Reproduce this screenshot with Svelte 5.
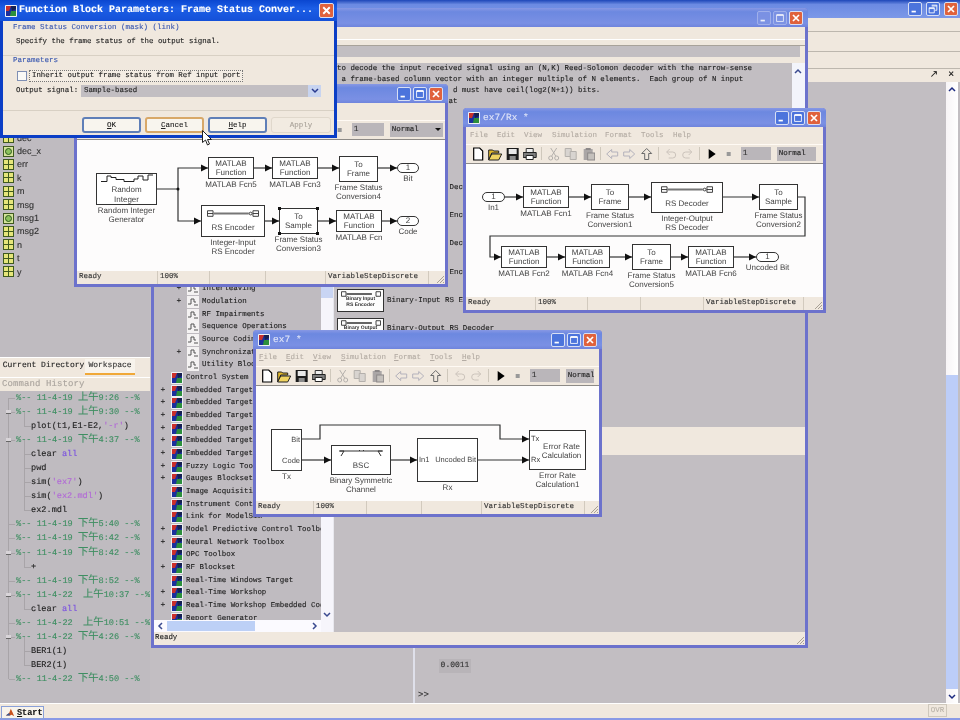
<script>
  const wsRows = [
    ['dec', 'grid'], ['dec_x', 'obj'], ['err', 'grid'], ['k', 'grid'], ['m', 'grid'], ['msg', 'grid'],
    ['msg1', 'obj'], ['msg2', 'grid'], ['n', 'grid'], ['t', 'grid'], ['y', 'grid']
  ];

  const d = (text, ampm, time, open = false, wide = false) => ({ kind: 'date', text, ampm, time, open, wide });
  const c = (parts) => ({ kind: 'cmd', parts });
  const history = [
    d('11-4-19', '上午', '9:26'),
    d('11-4-19', '上午', '9:30', true),
    c([['plot(t1,E1-E2,', ''], ["'-r'", 's'], [')', '']]),
    d('11-4-19', '下午', '4:37', true),
    c([['clear ', ''], ['all', 'k']]),
    c([['pwd', '']]),
    c([['sim(', ''], ["'ex7'", 's'], [')', '']]),
    c([['sim(', ''], ["'ex2.mdl'", 's'], [')', '']]),
    c([['ex2.mdl', '']]),
    d('11-4-19', '下午', '5:40'),
    d('11-4-19', '下午', '6:42'),
    d('11-4-19', '下午', '8:42', true),
    c([['+', '']]),
    d('11-4-19', '下午', '8:52'),
    d('11-4-22', '上午', '10:37', true, true),
    c([['clear ', ''], ['all', 'k']]),
    d('11-4-22', '上午', '10:51', false, true),
    d('11-4-22', '下午', '4:26', true),
    c([['BER1(1)', '']]),
    c([['BER2(1)', '']]),
    d('11-4-22', '下午', '4:50')
  ];

  const tree = [
    ['Interleaving', 1, 1], ['Modulation', 1, 1], ['RF Impairments', 1, 0], ['Sequence Operations', 1, 0],
    ['Source Coding', 1, 0], ['Synchronization', 1, 1], ['Utility Blocks', 1, 0],
    ['Control System Toolbox', 0, 0], ['Embedded Target for C2000', 0, 1], ['Embedded Target for C6000', 0, 1],
    ['Embedded Target for HC12', 0, 1], ['Embedded Target for MPC', 0, 1], ['Embedded Target for OSEK', 0, 1],
    ['Embedded Target for TI', 0, 1], ['Fuzzy Logic Toolbox', 0, 1], ['Gauges Blockset', 0, 1],
    ['Image Acquisition', 0, 0], ['Instrument Control', 0, 0], ['Link for ModelSim', 0, 0],
    ['Model Predictive Control Toolbox', 0, 1], ['Neural Network Toolbox', 0, 1], ['OPC Toolbox', 0, 0],
    ['RF Blockset', 0, 1], ['Real-Time Windows Target', 0, 0], ['Real-Time Workshop', 0, 1],
    ['Real-Time Workshop Embedded Coder', 0, 1], ['Report Generator', 0, 0]
  ];

  const libRows = [
    ['Binary Cyclic Decoder', ''], ['Binary Cyclic Encoder', ''], ['Binary Linear Decoder', ''],
    ['Binary Linear Encoder', ''], ['Binary-Input RS Encoder', 'Binary Input|RS Encoder'],
    ['Binary-Output RS Decoder', 'Binary Output|RS Decoder']
  ];

  const mf = ['MATLAB', 'Function'];
  const fsc = (n) => ['Frame Status', 'Conversion' + n];

  const windows = [
    {
      id: 'tx', x: 74, y: 84, w: 374, h: 203, title: 'ex7/Tx *', titleGap: 24,
      status: [81, 52, 56, 60, 103],
      comboW: 53, box: 32, menuLeft: 6, tbPad: 3,
      blocks: [
        { x: 96, y: 173, w: 61, h: 32, text: ['Random', 'Integer'], label: ['Random Integer', 'Generator'], icon: 'rand' },
        { x: 208, y: 157, w: 46, h: 22, text: mf, label: ['MATLAB Fcn5'] },
        { x: 272, y: 157, w: 46, h: 22, text: mf, label: ['MATLAB Fcn3'] },
        { x: 339, y: 156, w: 39, h: 26, text: ['To', 'Frame'], label: fsc(4) },
        { x: 397, y: 163, w: 22, h: 10, text: ['1'], label: ['Bit'], pill: true },
        { x: 201, y: 205, w: 64, h: 32, text: ['RS Encoder'], label: ['Integer-Input', 'RS Encoder'], icon: 'rs' },
        { x: 279, y: 208, w: 39, h: 26, text: ['To', 'Sample'], label: fsc(3), selected: true },
        { x: 336, y: 210, w: 46, h: 22, text: mf, label: ['MATLAB Fcn'] },
        { x: 397, y: 216, w: 22, h: 10, text: ['2'], label: ['Code'], pill: true }
      ],
      wires: [
        [[157, 189], [178, 189], [178, 168], [208, 168]],
        [[178, 189], [178, 221], [201, 221]],
        [[254, 168], [272, 168]], [[318, 168], [339, 168]], [[378, 168], [397, 168]],
        [[265, 221], [279, 221]], [[318, 221], [336, 221]], [[382, 221], [397, 221]]
      ]
    },
    {
      id: 'rx', x: 463, y: 108, w: 363, h: 205, title: 'ex7/Rx *', titleGap: 0,
      status: [70, 52, 53, 63, 100],
      comboW: 39, box: 30, menuLeft: 4, tbPad: 3,
      blocks: [
        { x: 482, y: 192, w: 23, h: 10, text: ['1'], label: ['In1'], pill: true },
        { x: 523, y: 186, w: 46, h: 22, text: mf, label: ['MATLAB Fcn1'] },
        { x: 591, y: 184, w: 38, h: 26, text: ['To', 'Frame'], label: fsc(1) },
        { x: 651, y: 182, w: 72, h: 31, text: ['RS Decoder'], label: ['Integer-Output', 'RS Decoder'], icon: 'rs' },
        { x: 759, y: 184, w: 39, h: 26, text: ['To', 'Sample'], label: fsc(2) },
        { x: 501, y: 246, w: 46, h: 22, text: mf, label: ['MATLAB Fcn2'] },
        { x: 565, y: 246, w: 45, h: 22, text: mf, label: ['MATLAB Fcn4'] },
        { x: 632, y: 244, w: 39, h: 26, text: ['To', 'Frame'], label: fsc(5) },
        { x: 688, y: 246, w: 46, h: 22, text: mf, label: ['MATLAB Fcn6'] },
        { x: 756, y: 252, w: 23, h: 10, text: ['1'], label: ['Uncoded Bit'], pill: true }
      ],
      wires: [
        [[505, 197], [523, 197]], [[569, 197], [591, 197]], [[629, 197], [651, 197]], [[723, 197], [759, 197]],
        [[798, 197], [805, 197], [805, 236], [490, 236], [490, 257], [501, 257]],
        [[547, 257], [565, 257]], [[610, 257], [632, 257]], [[671, 257], [688, 257]], [[734, 257], [756, 257]]
      ]
    },
    {
      id: 'top', x: 253, y: 330, w: 349, h: 187, title: 'ex7 *', titleGap: 0,
      status: [58, 53, 55, 60, 103],
      comboW: 28, box: 30, menuLeft: 3, tbPad: 2, underline: true,
      blocks: [
        { x: 271, y: 429, w: 31, h: 42, text: [], label: ['Tx'], ports: [['Bit', 'r', 10], ['Code', 'r', 31]] },
        { x: 331, y: 445, w: 60, h: 30, text: ['BSC'], label: ['Binary Symmetric', 'Channel'], icon: 'bsc' },
        { x: 417, y: 438, w: 61, h: 44, text: [], label: ['Rx'], ports: [['In1', 'l', 21], ['Uncoded Bit', 'r', 21]] },
        { x: 529, y: 430, w: 57, h: 40, text: ['Error Rate', 'Calculation'], label: ['Error Rate', 'Calculation1'], ports: [['Tx', 'l', 8], ['Rx', 'l', 29]], nudge: true }
      ],
      wires: [
        [[302, 439], [320, 439], [320, 425], [500, 425], [500, 439], [529, 439]],
        [[302, 460], [331, 460]], [[391, 460], [417, 460]], [[478, 460], [529, 460]]
      ]
    }
  ];

  const menuItems = [
    ['File', 27], ['Edit', 27], ['View', 28], ['Simulation', 53], ['Format', 36], ['Tools', 32], ['Help', 30]
  ];
  const tools = ['new', 'open', 'save', 'print', '|', 'cut', 'copy', 'paste', '|', 'back', 'fwd', 'up', '|', 'undo', 'redo', '|', 'play', 'stop'];
  const TITLE = 19, MENU = 17, BAR = 20, EDGE = 3;
  const originX = (w) => w.x + EDGE;
  const originY = (w) => w.y + TITLE + MENU + BAR;
  const pts = (wire) => wire.map((p) => p.join(',')).join(' ');
  const head = (wire) => {
    const [x, y] = wire[wire.length - 1];
    return `${x - 7},${y - 3.5} ${x},${y} ${x - 7},${y + 3.5}`;
  };
</script>

{#snippet simIcon()}
  <svg class="simicon" viewBox="0 0 12 12" aria-hidden="true">
    <rect width="12" height="12" rx="1" fill="#eef0f4" />
    <rect x="1" y="1" width="10" height="10" fill="#1b2f9c" />
    <path d="M1 1h5l-2 5H1z" fill="#c9302c" />
    <path d="M6 6h5v5H5z" fill="#2c8f3c" />
    <path d="M6 1h5v3L7 6z" fill="#16204f" />
  </svg>
{/snippet}

{#snippet winButtons(active, restore = false)}
  <div class="wbs" class:wide={restore}>
    <span class="wb" class:dim={!active}><svg viewBox="0 0 14 14" aria-hidden="true"><rect x="3" y="9" width="5" height="2" fill="#fff" /></svg></span>
    <span class="wb" class:dim={!active}>
      <svg viewBox="0 0 14 14" aria-hidden="true">
        {#if restore}
          <path d="M5.500 2.500h6v6h-2M2.500 5.500h6v6h-6zM2.500 6.500h6M5.500 3.500h6" fill="none" stroke="#fff" />
        {:else}
          <path d="M3 3.500h8v7.500H3z" fill="none" stroke="#fff" /><path d="M3 3.500h8" stroke="#fff" stroke-width="2" />
        {/if}
      </svg>
    </span>
    <span class="wb close"><svg viewBox="0 0 14 14" aria-hidden="true"><path d="M3.500 3.500l7 7M10.500 3.500l-7 7" stroke="#fff" stroke-width="2" /></svg></span>
  </div>
{/snippet}

{#snippet tool(name)}
  <svg class="tool" viewBox="0 0 14 14" aria-hidden="true">
    {#if name === 'new'}
      <path d="M3 1h6l3 3v9H3z" fill="#fff" stroke="#000" stroke-width="1.200" />
    {:else if name === 'open'}
      <path d="M1 3h4l1 1h5v2H4l-3 7z" fill="#e2b92e" stroke="#222" /><path d="M1 13l3-6h10l-3 6z" fill="#f0d462" stroke="#222" />
    {:else if name === 'save'}
      <path d="M1 1h12v12H1z" fill="#1c1c1c" /><rect x="3" y="2" width="8" height="5" fill="#e8e8e8" /><rect x="4" y="9" width="6" height="4" fill="#8c8c8c" />
    {:else if name === 'print'}
      <path d="M3.500 1.500h7v4h-7z" fill="#eee" stroke="#333" /><path d="M.500 5.500h13v5H.500z" fill="#7d7d7d" stroke="#222" /><path d="M3.500 8.500h7v4h-7z" fill="#fff" stroke="#222" />
    {:else if name === 'cut'}
      <path d="M4 1l5 8M10 1L5 9" stroke="#b4b0ac" fill="none" /><circle cx="4" cy="11" r="2" fill="none" stroke="#b4b0ac" /><circle cx="10" cy="11" r="2" fill="none" stroke="#b4b0ac" />
    {:else if name === 'copy'}
      <path d="M1.500 1.500h6v8h-6z" fill="#d8d4d0" stroke="#b4b0ac" /><path d="M6.500 4.500h6v8h-6z" fill="#d8d4d0" stroke="#b4b0ac" />
    {:else if name === 'paste'}
      <path d="M2 2h9v11H2z" fill="#aaa6a6" /><rect x="4" y="1" width="5" height="2" fill="#8c8888" /><rect x="6" y="6" width="7" height="7" fill="#c4c0bc" stroke="#8c8888" />
    {:else if name === 'back'}
      <path d="M7 2.500L2 7l5 4.500V9h6V5H7z" fill="none" stroke="#b4b2bc" />
    {:else if name === 'fwd'}
      <path d="M7 2.500L12 7l-5 4.500V9H1V5h6z" fill="none" stroke="#b4b2bc" />
    {:else if name === 'up'}
      <path d="M7 1.500L2 6.500h3v6h4v-6h3z" fill="none" stroke="#6a6a6a" />
    {:else if name === 'undo'}
      <path d="M3 5h6a3 3 0 0 1 0 6H5M3 5l3-3M3 5l3 3" fill="none" stroke="#ccc4bc" />
    {:else if name === 'redo'}
      <path d="M11 5H5a3 3 0 0 0 0 6h4M11 5L8 2M11 5L8 8" fill="none" stroke="#ccc4bc" />
    {:else if name === 'play'}
      <path d="M4 2l7 5-7 5z" fill="#000" />
    {:else}
      <rect x="5" y="5" width="4" height="4" fill="#999" />
    {/if}
  </svg>
{/snippet}

{#snippet blockIcon(kind)}
  {#if kind === 'rand'}
    <svg class="bi" viewBox="0 0 52 8" aria-hidden="true"><path d="M0 7.500h6V2h4v1.500h5v2h8v2h10V5h4V2h5v4h5V1h5" fill="none" stroke="#222" /></svg>
  {:else if kind === 'rs'}
    <svg class="bi rs" viewBox="0 0 56 8" aria-hidden="true"><path d="M.500.500h6v6h-6zM49.500.500h6v6h-6zM.500 3.500h6M49.500 3.500h6" fill="none" stroke="#333" /><path d="M7 3.500h38" stroke="#777" stroke-width="2" /><circle cx="47" cy="3.500" r="1.500" fill="#fff" stroke="#333" /></svg>
  {:else}
    <svg class="bi" viewBox="0 0 52 8" aria-hidden="true"><path d="M5 1h42M4 1h5L6 6M48 1h-5l3 5M24 .500h1M28 .500h1" fill="none" stroke="#333" /></svg>
  {/if}
{/snippet}

{#snippet simWindow(w)}
  <section class="win" style:left="{w.x}px" style:top="{w.y}px" style:width="{w.w}px" style:height="{w.h}px">
    <header class="title">
      {@render simIcon()}
      <span class="title-text" style:margin-left="{w.titleGap}px">{w.title}</span>
      {@render winButtons(true)}
    </header>
    <nav class="menu" style:padding-left="{w.menuLeft}px">
      {#each menuItems as [m, width]}
        <span style:width="{width}px" class:ul={w.underline}>{m}</span>
      {/each}
    </nav>
    <div class="bar" style:padding-left="{w.tbPad}px">
      {#each tools as t}
        {#if t === '|'}<i class="sep"></i>{:else}{@render tool(t)}{/if}
      {/each}
      <span class="box" style:width="{w.box}px">1</span>
      <span class="combo" style:width="{w.comboW}px">Normal{#if w.id === 'tx'}<b class="caret"></b>{/if}</span>
    </div>
    <div class="canvas">
      <svg class="wires" aria-hidden="true">
        <g transform="translate({-originX(w)} {-originY(w)})">
          {#each w.wires as wire}
            <polyline points={pts(wire)} />
            <polygon points={head(wire)} />
          {/each}
          {#if w.id === 'tx'}<circle cx="178" cy="189" r="1.500" />{/if}
        </g>
      </svg>
      {#each w.blocks as b}
        <div class="blk" class:pill={b.pill} class:nudge={b.nudge}
          style:left="{b.x - originX(w)}px" style:top="{b.y - originY(w)}px"
          style:width="{b.w}px" style:height="{b.h}px">
          {#if b.icon}{@render blockIcon(b.icon)}{/if}
          {#each b.text as line}<span>{line}</span>{/each}
          {#each b.ports ?? [] as [t, side, top]}
            <em class="port {side}" style:top="{top - 5}px">{t}</em>
          {/each}
          {#if b.selected}<u class="h tl"></u><u class="h tr"></u><u class="h bl"></u><u class="h br"></u>{/if}
          <div class="lab">{#each b.label as line}<span>{line}</span>{/each}</div>
        </div>
      {/each}
    </div>
    <footer class="status">
      <span style:width="{w.status[0]}px">Ready</span>
      <span style:width="{w.status[1]}px">100%</span>
      <span style:width="{w.status[2]}px"></span>
      <span style:width="{w.status[3]}px"></span>
      <span style:width="{w.status[4]}px">VariableStepDiscrete</span>
      <svg class="grip" viewBox="0 0 10 10" aria-hidden="true"><path d="M9 2L2 9M9 5L5 9M9 8L8 9" stroke="#a8a094" /></svg>
    </footer>
  </section>
{/snippet}

<div class="screen">
  <div class="desk">
    <header class="main-title">{@render winButtons(true, true)}</header>
    <div class="main-band h1"></div>
    <div class="main-band h2"></div>
    <div class="main-band h3"></div>
    <div class="dockhead"><span>↗</span><span>×</span></div>

    <div class="body">
      <aside class="left">
        <div class="ws">
          {#each wsRows as [name, kind]}
            <div class="ws-row">
              <svg class="wsicon" viewBox="0 0 11 11" aria-hidden="true">
                <rect x=".5" y=".5" width="10" height="10" fill={kind === 'obj' ? '#d4e49a' : '#e6e67a'} stroke="#3f5a1e" />
                {#if kind === 'obj'}
                  <circle cx="5.500" cy="5.500" r="3" fill="#8cc25c" stroke="#2f5a1e" />
                {:else}
                  <path d="M5.500 0v11M0 5.500h11" stroke="#3f5a1e" />
                {/if}
              </svg>
              {name}
            </div>
          {/each}
        </div>
        <div class="tabs">
          <span class="tab">Current Directory</span>
          <span class="tab on">Workspace</span>
        </div>
        <div class="hist-head">Command History</div>
        <div class="hist">
          {#each history as row}
            {#if row.kind === 'date'}
              <div class="hrow date" class:open={row.open}>%-- {row.text}{row.wide ? '  ' : ' '}<span class="cjk">{row.ampm}</span>{row.time} --%</div>
            {:else}
              <div class="hrow cmd">{#each row.parts as [t, k]}<span class={k}>{t}</span>{/each}</div>
            {/if}
          {/each}
        </div>
      </aside>

      <main class="right">
        <div class="cmdwin">
          <div class="cmd-scroll">
            <span class="ans">0.0011</span>
            <span class="prompt">&gt;&gt;</span>
          </div>
          <div class="vbar">
            <svg class="upb" viewBox="0 0 8 6" aria-hidden="true"><path d="M1 5l3-3 3 3" fill="none" stroke="#1c2a80" stroke-width="1.500" /></svg>
            <span class="thumb"></span>
            <svg class="dn" viewBox="0 0 8 6" aria-hidden="true"><path d="M1 1l3 3 3-3" fill="none" stroke="#1c2a80" stroke-width="1.500" /></svg>
          </div>
        </div>
      </main>
    </div>

    <footer class="main-status">
      <button class="start">
        <svg viewBox="0 0 12 12" aria-hidden="true"><path d="M1 9l4-3 2-5 2 4 2 5-3-2-2 1z" fill="#c8501c" /><path d="M1 9l4-3 1 3z" fill="#2c5aa0" /></svg>
        <span><u>S</u>tart</span>
      </button>
      <span class="ovr">OVR</span>
    </footer>
  </div>

  <section class="lib">
    <header class="title">
      {@render simIcon()}
      <span class="title-text">Simulink Library Browser</span>
      {@render winButtons(false)}
    </header>
    <div class="lib-menu"></div>
    <div class="lib-search"></div>
    <div class="lib-gap"></div>
    <div class="lib-body">
      <div class="tree">
        <div class="tree-scroll">
          {#each tree as [name, sub, plus]}
            <div class="tnode" class:sub={sub}>
              <span class="plus">{plus ? '+' : ''}</span>
              {#if sub}
                <svg class="subicon" viewBox="0 0 12 12" aria-hidden="true"><rect width="12" height="12" fill="#f4f2f2" /><path d="M1 8h3V3h3v3h2M7 9h4" fill="none" stroke="#555" /></svg>
              {:else}
                {@render simIcon()}
              {/if}
              <span class="tname">{name}</span>
            </div>
          {/each}
        </div>
        <div class="hbar">
          <svg viewBox="0 0 8 8" aria-hidden="true"><path d="M5 1L2 4l3 3" fill="none" stroke="#3a4a90" stroke-width="1.500" /></svg>
          <span class="hthumb"></span>
          <svg viewBox="0 0 8 8" aria-hidden="true"><path d="M3 1l3 3-3 3" fill="none" stroke="#3a4a90" stroke-width="1.500" /></svg>
        </div>
      </div>
      <div class="tvbar">
        <span class="tv-thumb"></span>
        <svg viewBox="0 0 8 6" aria-hidden="true"><path d="M1 1l3 3 3-3" fill="none" stroke="#3a4a90" stroke-width="1.500" /></svg>
      </div>
      <div class="pane">
        <div class="desc">
          <pre class="desc-text">to decode the input received signal using an (N,K) Reed-Solomon decoder with the narrow-sense
 a frame-based column vector with an integer multiple of N elements.  Each group of N input
                          d must have ceil(log2(N+1)) bits.
                         at</pre>
          <div class="desc-bar"><svg viewBox="0 0 8 6" aria-hidden="true"><path d="M1 5l3-3 3 3" fill="none" stroke="#3a4a90" stroke-width="1.500" /></svg></div>
        </div>
        <div class="lib-list">
          {#each libRows as [name, caption]}
            <div class="lrow">
              <div class="mini">
                <svg viewBox="0 0 44 6" aria-hidden="true"><path d="M.500.500h5v5h-5zM38.500.500h5v5h-5z" fill="none" stroke="#333" /><path d="M6 3h28" stroke="#555" stroke-width="2" /></svg>
                {#each caption.split('|') as cap}<span>{cap}</span>{/each}
              </div>
              <span class="lname">{name}</span>
            </div>
          {/each}
        </div>
        <div class="band"></div>
        <div class="pane-rest"></div>
      </div>
    </div>
    <footer class="lib-status">
      Ready
      <svg class="grip" viewBox="0 0 10 10" aria-hidden="true"><path d="M9 2L2 9M9 5L5 9M9 8L8 9" stroke="#a8a094" /></svg>
    </footer>
  </section>

  {#each windows as w}
    {@render simWindow(w)}
  {/each}

  <section class="dialog">
    <header class="dlg-title">
      {@render simIcon()}
      <span>Function Block Parameters: Frame Status Conver...</span>
      <span class="wb close"><svg viewBox="0 0 14 14" aria-hidden="true"><path d="M3.500 3.500l7 7M10.500 3.500l-7 7" stroke="#fff" stroke-width="2" /></svg></span>
    </header>
    <div class="dlg-body">
      <div class="grp">
        <div class="legend">Frame Status Conversion (mask) (link)</div>
        <div class="dlg-desc">Specify the frame status of the output signal.</div>
      </div>
      <div class="legend l2">Parameters</div>
      <div class="check-row">
        <i class="check"></i>
        <span class="focus">Inherit output frame status from Ref input port</span>
      </div>
      <div class="sel-row">
        <span class="sel-label">Output signal:</span>
        <span class="sel">Sample-based
          <b class="sel-btn"><svg viewBox="0 0 8 6" aria-hidden="true"><path d="M1 1l3 3 3-3" fill="none" stroke="#2a3a90" stroke-width="1.500" /></svg></b>
        </span>
      </div>
      <div class="dlg-btns">
        <button class="btn focus-btn"><u>O</u>K</button>
        <button class="btn hot"><u>C</u>ancel</button>
        <button class="btn focus-btn"><u>H</u>elp</button>
        <button class="btn off">Apply</button>
      </div>
    </div>
  </section>

  <svg class="cursor" viewBox="0 0 10 16" aria-hidden="true"><path d="M.5.500v12l3-2.500 2 5 2-1-2-4.500h4z" fill="#fff" stroke="#222" /></svg>
</div>

<style>
  :global(body) { margin: 0; background: #c2bec2; }
  .screen {
    position: relative; width: 960px; height: 720px; overflow: hidden; background: #c2bec2;
    font-family: "Liberation Mono", monospace; font-size: 7.5px; color: #222;
    text-rendering: geometricPrecision; filter: blur(.35px); -webkit-text-stroke: .12px currentColor;
  }
  svg { display: block; flex: none; }

  /* desktop */
  .desk { display: flex; flex-direction: column; height: 720px; }
  .main-title {
    height: 18px; flex: none; display: flex; justify-content: flex-end; align-items: center; padding-right: 2px;
    background: linear-gradient(#1d46b8, #6b8ae2 25%, #7c98e8);
  }
  .main-band { flex: none; background: #f0e8de; border-bottom: 1px solid #bdb7ae; box-sizing: content-box; }
  .h1 { height: 13px; } .h2 { height: 19px; } .h3 { height: 16px; }
  .dockhead {
    height: 13px; flex: none; background: #f0e8de; display: flex; justify-content: flex-end; gap: 10px;
    padding-right: 6px; font: 10px/12px "Liberation Sans", sans-serif; color: #111; border-bottom: 0;
  }
  .body { flex: 1; display: flex; min-height: 0; }
  .left { width: 150px; flex: none; display: flex; flex-direction: column; background: #bfbbc0; box-sizing: border-box; }
  .ws { height: 275px; flex: none; padding-top: 49px; box-sizing: border-box; }
  .ws-row { height: 13.4px; display: flex; align-items: center; gap: 3px; padding-left: 3px; font: 9px "Liberation Sans", sans-serif; color: #333; }
  .wsicon { width: 11px; height: 11px; }
  .tabs { height: 20px; flex: none; background: #f0e8de; border-top: 1px solid #fff; box-sizing: border-box; display: flex; padding: 1px 0 0 2px; }
  .tab { width: 83px; height: 14px; line-height: 14px; text-align: center; font-size: 8px; color: #222; }
  .tab.on { width: 50px; background: #f7f3ec; border-bottom: 2px solid #f0a838; color: #333; }
  .hist-head { height: 13px; flex: none; line-height: 13px; background: #efe7dc; border-top: 1px solid #fff; color: #aaa49e; font-size: 9px; padding-left: 2px; letter-spacing: .1px; }
  .hist { flex: 1; position: relative; padding-top: 0; font-size: 8.6px; line-height: 14px; overflow: hidden; }
  .hist::before { content: ""; position: absolute; left: 8px; top: 7px; height: 281px; border-left: 1px solid #a8a4a8; }
  .hrow { position: relative; height: 14.05px; white-space: pre; }
  .date { padding-left: 16px; color: #3f8f62; }
  .date::before { content: ""; position: absolute; left: 9px; top: 7px; width: 6px; border-top: 1px solid #a8a4a8; }
  .date.open::after {
    content: ""; position: absolute; left: 6px; top: 5px; width: 5px; height: 3px;
    background: #d8d4d8; border-bottom: 1px solid #666;
  }
  .cjk { font-family: "Noto Sans CJK SC", sans-serif; font-size: 10.3px; line-height: 10px; }
  .hrow.cmd { padding-left: 31px; color: #222; }
  .hrow.cmd::before { content: ""; position: absolute; left: 24px; top: -7px; height: 14px; width: 6px; border-left: 1px solid #a8a4a8; border-bottom: 1px solid #a8a4a8; }
  .s { color: #b26ad6; } .k { color: #7a50e0; }

  .right { flex: 1; min-width: 0; }
  .cmdwin { height: 100%; position: relative; }
  .cmd-scroll { position: absolute; left: 263px; bottom: 0; width: 530px; height: 55px; border-left: 2px solid #dfe0ea; }
  .ans { position: absolute; left: 24px; top: 11px; width: 32px; height: 14px; line-height: 14px; text-align: center; background: #b8b4b8; font-size: 8px; color: #333; }
  .prompt { position: absolute; left: 3px; top: 42px; font-size: 9px; color: #333; }
  .vbar { position: absolute; right: 2px; top: 0; bottom: 0; width: 12px; background: linear-gradient(90deg, #f7f4f6, #fff); }
  .upb { position: absolute; left: 2px; top: 4px; width: 8px; height: 6px; }
  .thumb { position: absolute; left: 0; right: 0; top: 293px; bottom: 14px; background: #bccdf8; }
  .dn { position: absolute; left: 2px; bottom: 3px; width: 8px; height: 6px; }
  .main-status { height: 14px; flex: none; background: #f0e8de; position: relative; border-bottom: 2px solid #8a9ae6; border-top: 1px solid #fff; }
  .start {
    position: absolute; left: 1px; top: 2px; width: 43px; height: 13px; padding: 0 0 0 3px; display: flex; align-items: center; gap: 2px;
    border: 1px solid #8aa0d8; background: #f8f4ec; font: bold 8.5px "Liberation Mono", monospace; color: #111; box-sizing: border-box;
  }
  .start svg { width: 10px; height: 10px; }
  .ovr { position: absolute; left: 928px; top: 0; width: 19px; height: 13px; line-height: 13px; text-align: center; border: 1px solid #cfc8bc; box-sizing: border-box; color: #bbb4aa; }

  /* title controls */
  .wbs { display: flex; gap: 2px; margin-left: auto; }
  .wbs.wide { gap: 4px; }
  .wb { width: 14px; height: 14px; border-radius: 2px; background: #4c74dc; border: 1px solid #d8dff4; box-sizing: border-box; display: block; flex: none; }
  .wb.dim { background: #7d93e4; border-color: #a8b6ec; opacity: .85; }
  .wb.close { background: #e0623c; }
  .wb svg { width: 12px; height: 12px; }
  .simicon { width: 12px; height: 12px; }

  /* windows */
  .win, .lib {
    position: absolute; display: flex; flex-direction: column; box-sizing: border-box; background: #f0e8de;
    border: 3px solid #6c72cc; border-top: 0; border-radius: 4px 4px 0 0;
  }
  .title {
    height: 19px; flex: none; margin: 0 -3px; padding: 0 5px; display: flex; align-items: center; gap: 3px; border-radius: 4px 4px 0 0;
    background: linear-gradient(#8898e4, #6c88e0 20%, #7a90e4 80%, #6f84dc);
  }
  .title-text { color: #dfe4f8; font-size: 9.400px; letter-spacing: .1px; }
  .menu { height: 17px; flex: none; display: flex; align-items: center; box-sizing: border-box; }
  .menu span { color: #b4aca4; font-size: 7.500px; flex: none; }
  .menu span.ul::first-letter { text-decoration: underline; }
  .bar { height: 20px; flex: none; display: flex; align-items: center; box-sizing: border-box; border-top: 1px solid #fffaf4; border-bottom: 1px solid #8d8a86; padding-bottom: 1px; }
  .tool { width: 14px; height: 14px; padding: 0 1.700px; }
  .sep { width: 1px; height: 13px; margin: 0 2.700px; background: #cfc8bc; flex: none; }
  .box { height: 13px; line-height: 13px; padding-left: 2px; margin-left: 3px; background: #bab6ba; color: #333; font-size: 8px; box-sizing: border-box; flex: none; }
  .combo { position: relative; height: 14px; line-height: 14px; padding-left: 2px; margin-left: 6px; background: #bab6ba; font-size: 7.500px; color: #222; box-sizing: border-box; flex: none; overflow: hidden; white-space: nowrap; }
  .caret { position: absolute; right: 2px; top: 5px; border: 3px solid transparent; border-top-color: #111; }
  .canvas { flex: 1; position: relative; background: #fdfcfc; min-height: 0; }
  .wires { position: absolute; inset: 0; width: 100%; height: 100%; }
  .wires polyline { fill: none; stroke: #333; stroke-width: 1.200; }
  .wires polygon, .wires circle { fill: #111; }
  .blk {
    position: absolute; box-sizing: border-box; border: 1.300px solid #333; background: #fff;
    display: flex; flex-direction: column; align-items: center; justify-content: center;
    font: 8px/9.500px "Liberation Sans", sans-serif; color: #444; -webkit-text-stroke: 0;
  }
  .blk.pill { border-radius: 5px; line-height: 8px; }
  .blk.nudge { padding-left: 8px; padding-top: 2px; }
  .bi { width: 52px; height: 8px; margin-bottom: 3px; max-width: 90%; }
  .bi.rs { margin-bottom: 5px; }
  .port { position: absolute; font-style: normal; font-size: 7.500px; line-height: 10px; }
  .port.r { right: 1px; } .port.l { left: 1px; }
  .h { position: absolute; width: 3px; height: 3px; background: #111; }
  .tl { left: -2px; top: -2px; } .tr { right: -2px; top: -2px; } .bl { left: -2px; bottom: -2px; } .br { right: -2px; bottom: -2px; }
  .lab { position: absolute; top: 100%; left: 50%; transform: translateX(-50%); width: max-content; padding-top: 1.500px; display: flex; flex-direction: column; align-items: center; line-height: 9.500px; }
  .status { height: 13px; flex: none; display: flex; align-items: stretch; background: #f0e8de; line-height: 13px; position: relative; }
  .status span { box-sizing: border-box; padding-left: 2px; border-right: 1px solid #d2cabe; color: #333; white-space: nowrap; flex: none; }
  .grip { position: absolute; right: 0; bottom: 0; width: 10px; height: 10px; }

  /* library */
  .lib { left: 151px; top: 8px; width: 657px; height: 640px; }
  .lib-menu { height: 19px; flex: none; box-sizing: border-box; border-bottom: 1px solid #a8a29a; box-shadow: inset 0 -5px 0 #f0e8de, inset 0 -6px 0 #fff; }
  .lib-search { height: 11px; flex: none; background: #c2bec2; margin-right: 5px; }
  .lib-gap { height: 6px; flex: none; }
  .lib-body { flex: 1; display: flex; min-height: 0; }
  .tree { width: 167px; flex: none; display: flex; flex-direction: column; background: #bfbbc0; }
  .tree-scroll { flex: 1; overflow: hidden; padding-top: 220px; min-height: 0; }
  .tnode { height: 12.680px; display: flex; align-items: center; white-space: nowrap; padding-left: 1px; font-size: 7.450px; color: #222; }
  .plus { width: 16px; flex: none; text-align: center; font-size: 8px; line-height: 8px; }
  .simicon + .tname { margin-left: 3px; }
  .tnode.sub { padding-left: 17px; }
  .subicon { width: 12px; height: 12px; margin-right: 3px; }
  .hbar { height: 12px; flex: none; background: #fbfaff; display: flex; align-items: center; padding: 0 3px; box-sizing: border-box; }
  .hbar svg { width: 8px; height: 8px; }
  .hthumb { width: 88px; height: 10px; margin: 0 2px; background: #bdd0f6; margin-right: auto; }
  .tvbar { width: 12px; flex: none; background: #f6f5fb; display: flex; flex-direction: column; justify-content: flex-end; position: relative; padding-bottom: 14px; box-sizing: border-box; }
  .tv-thumb { position: absolute; top: 0; left: 0; right: 0; height: 235px; background: #c9d5f4; }
  .tvbar svg { width: 8px; height: 6px; margin-left: 2px; }
  .pane { flex: 1; display: flex; flex-direction: column; min-width: 0; border-left: 1px solid #e8e8ee; background: #c2bec2; }
  .desc { height: 45px; flex: none; position: relative; overflow: hidden; }
  .desc-text { margin: 0; padding: 1px 0 0 3px; font: 7.450px/11px "Liberation Mono", monospace; color: #222; }
  .desc-bar { position: absolute; right: 0; top: 0; bottom: 0; width: 13px; background: #f3f4fb; }
  .desc-bar svg { width: 8px; height: 6px; margin: 5px 0 0 2px; }
  .lib-list { height: 319px; flex: none; padding-top: 66px; box-sizing: border-box; overflow: hidden; }
  .lrow { height: 28.200px; display: flex; align-items: center; padding-left: 3px; gap: 3px; }
  .mini { width: 47px; height: 23px; flex: none; box-sizing: border-box; border: 1px solid #333; background: #fdfdfd; display: flex; flex-direction: column; align-items: center; font: bold 5px/5.500px "Liberation Sans", sans-serif; color: #333; padding-top: 1px; -webkit-text-stroke: 0; }
  .mini svg { width: 40px; height: 6px; }
  .lname { font-size: 7.450px; color: #222; white-space: nowrap; }
  .band { height: 28px; flex: none; background: #f0e8de; }
  .pane-rest { flex: 1; }
  .lib-status { height: 13px; flex: none; line-height: 13px; padding-left: 1px; position: relative; color: #222; font-size: 7.450px; }

  /* dialog */
  .dialog {
    position: absolute; left: 0; top: 0; width: 337px; height: 138px; box-sizing: border-box; display: flex; flex-direction: column;
    background: #f0e8de; border: 3px solid #0b3ec6; border-top: 0; border-radius: 5px 5px 0 0;
  }
  .dlg-title {
    height: 21px; flex: none; margin: 0 -3px; padding: 0 3px 0 5px; display: flex; align-items: center; gap: 2px;
    background: linear-gradient(#0a46d0, #1c5ee6 40%, #1450d8);
    color: #fff; font: bold 10px "Liberation Mono", monospace; white-space: nowrap;
  }
  .dlg-title .wb { margin-left: auto; width: 15px; height: 15px; }
  .dlg-title .wb svg { width: 13px; height: 13px; }
  .dlg-body { flex: 1; display: flex; flex-direction: column; min-height: 0; }
  .grp { height: 35px; flex: none; border-bottom: 1px solid #d8d0c4; box-sizing: border-box; }
  .legend { height: 14px; line-height: 14px; padding-left: 10px; color: #3a58b0; font-size: 7.500px; }
  .legend.l2 { height: 11px; line-height: 11px; }
  .dlg-desc { height: 14px; line-height: 14px; padding-left: 13px; font-size: 7.400px; }
  .check-row { height: 16px; flex: none; display: flex; align-items: center; padding: 2px 0 0 14px; box-sizing: border-box; }
  .check { width: 10px; height: 10px; border: 1px solid #7f8fb4; box-sizing: border-box; background: #fbfaf7; flex: none; }
  .focus { margin-left: 2px; padding: 0 2px; height: 12px; line-height: 11px; box-sizing: border-box; border: 1px dotted #777; background: #f4ede4; font-size: 7.400px; color: #222; white-space: nowrap; }
  .sel-row { height: 16px; flex: none; display: flex; align-items: center; padding-left: 13px; }
  .sel-label { width: 65px; flex: none; font-size: 7.400px; }
  .sel { width: 240px; height: 12px; line-height: 12px; padding-left: 3px; box-sizing: border-box; background: #c2bec2; position: relative; font-size: 7.400px; }
  .sel-btn { position: absolute; right: 0; top: 0; bottom: 0; width: 13px; background: #c8d4f0; display: flex; align-items: center; justify-content: center; }
  .sel-btn svg { width: 8px; height: 6px; }
  .dlg-btns { margin-top: auto; display: flex; gap: 4px; padding: 6px 0 2px 79px; border-top: 1px solid #d8d0c4; }
  .btn { width: 59px; height: 16px; padding: 0; border-radius: 3px; background: #f8f5ee; font: 7.500px "Liberation Mono", monospace; color: #222; box-sizing: border-box; }
  .focus-btn { border: 2px solid #5f7fb8; }
  .hot { border: 2px solid #d8a868; }
  .off { border: 1px solid #e0d8cc; color: #aaa39a; background: #f2ebe1; width: 60px; }
  .cursor { position: absolute; left: 202px; top: 130px; width: 10px; height: 16px; }
</style>
